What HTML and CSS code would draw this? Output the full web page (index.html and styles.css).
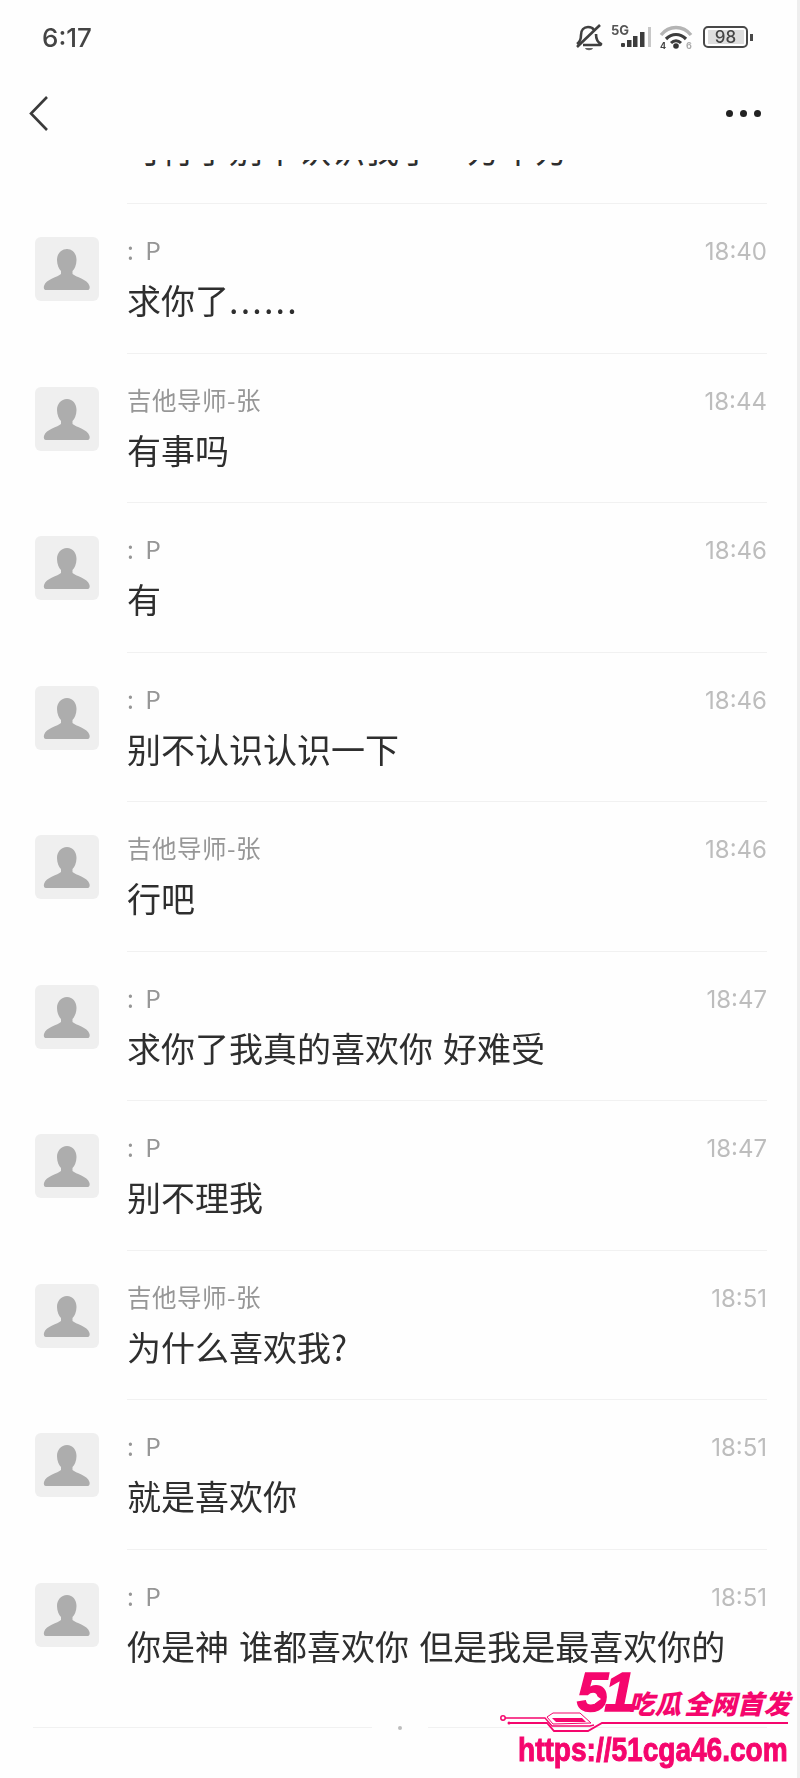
FILE: index.html
```html
<!DOCTYPE html>
<html lang="zh-CN">

<head>
    <meta charset="UTF-8">
    <meta name="viewport" content="width=device-width, initial-scale=1.0">
    <title>聊天记录</title>
    <link rel="stylesheet" href="styles.css">
</head>

<body>

    <svg class="defs" width="0" height="0">
        <symbol id="person" viewBox="0 0 64 64">
            <rect width="64" height="64" rx="6" fill="#efefef" />
            <path d="M32 12c6 0 9.500 5 9.500 11 0 5-2 9-4 11v3c3 3 15 5 17 12 .5 2 0 4-2 4H11c-2 0-2.500-2-2-4 2-7 14-9 17-12v-3c-2-2-4-6-4-11 0-6 4-11 10-11z" fill="#adadad" />
        </symbol>
    </svg>

    <div class="screen">

        <div class="status-bar">
            <span class="clock">6:17</span>
            <div class="status-icons">
                <svg class="icon-bell" width="28" height="30" viewBox="0 0 28 30">
                    <path d="M2 22c3-2 4-5 4-9 0-5 3-8 7-8 3 0 5 1 6 3M21 12c0 4 1 8 5 10 0 1-1 1-2 1H8" fill="none" stroke="#404040" stroke-width="2.600" />
                    <path d="M2 25L25 3" stroke="#404040" stroke-width="2.600" />
                    <path d="M10 26h8c-1 3-7 3-8 0z" fill="#666" />
                </svg>
                <span class="net-label">5G</span>
                <svg class="icon-signal" width="32" height="22" viewBox="0 0 32 22">
                    <rect x="0" y="17" width="4" height="4" rx="1" fill="#3c3c3c" />
                    <rect x="6" y="14" width="4.500" height="7" fill="#3c3c3c" />
                    <rect x="12" y="10" width="4.500" height="11" fill="#3c3c3c" />
                    <rect x="19" y="6" width="4.500" height="15" fill="#3c3c3c" />
                    <rect x="27" y="1" width="3" height="20" fill="#c8c8c8" />
                </svg>
                <svg class="icon-wifi" width="34" height="26" viewBox="0 0 34 26">
                    <path d="M2 11C10 1 24 1 32 11" fill="none" stroke="#b4b4b4" stroke-width="3.400" />
                    <path d="M7 15c6-6 14-6 20 0" fill="none" stroke="#3c3c3c" stroke-width="3.200" />
                    <path d="M12 19c3-3 7-3 10 0" fill="none" stroke="#3c3c3c" stroke-width="3" />
                    <circle cx="17" cy="22" r="2.800" fill="#333" />
                    <text x="1" y="25" class="wifi-tag">4</text>
                    <text x="27" y="25" class="wifi-tag wifi-tag-light">6</text>
                </svg>
                <div class="battery">
                    <div class="battery-body"><span class="battery-level">98</span></div>
                    <div class="battery-nub"></div>
                </div>
            </div>
        </div>

        <div class="nav">
            <svg width="22" height="38" viewBox="0 0 22 38">
                <path d="M19 2L3 18.500 19 35" fill="none" stroke="#3a3a3a" stroke-width="2.600" />
            </svg>
            <div class="more"><i></i><i></i><i></i></div>
        </div>

        <div class="clipped-row">
            <div class="msg">可行了别不认识我了一方不方</div>
        </div>

        <div class="row">
            <svg class="avatar"><use href="#person" /></svg>
            <div class="content">
                <div class="head"><span class="name">: P</span><span class="time">18:40</span></div>
                <div class="msg">求你了<span class="dots">......</span></div>
            </div>
        </div>

        <div class="row">
            <svg class="avatar"><use href="#person" /></svg>
            <div class="content">
                <div class="head"><span class="name">吉他导师-张</span><span class="time">18:44</span></div>
                <div class="msg">有事吗</div>
            </div>
        </div>

        <div class="row">
            <svg class="avatar"><use href="#person" /></svg>
            <div class="content">
                <div class="head"><span class="name">: P</span><span class="time">18:46</span></div>
                <div class="msg">有</div>
            </div>
        </div>

        <div class="row">
            <svg class="avatar"><use href="#person" /></svg>
            <div class="content">
                <div class="head"><span class="name">: P</span><span class="time">18:46</span></div>
                <div class="msg">别不认识认识一下</div>
            </div>
        </div>

        <div class="row">
            <svg class="avatar"><use href="#person" /></svg>
            <div class="content">
                <div class="head"><span class="name">吉他导师-张</span><span class="time">18:46</span></div>
                <div class="msg">行吧</div>
            </div>
        </div>

        <div class="row">
            <svg class="avatar"><use href="#person" /></svg>
            <div class="content">
                <div class="head"><span class="name">: P</span><span class="time">18:47</span></div>
                <div class="msg">求你了我真的喜欢你 好难受</div>
            </div>
        </div>

        <div class="row">
            <svg class="avatar"><use href="#person" /></svg>
            <div class="content">
                <div class="head"><span class="name">: P</span><span class="time">18:47</span></div>
                <div class="msg">别不理我</div>
            </div>
        </div>

        <div class="row">
            <svg class="avatar"><use href="#person" /></svg>
            <div class="content">
                <div class="head"><span class="name">吉他导师-张</span><span class="time">18:51</span></div>
                <div class="msg">为什么喜欢我?</div>
            </div>
        </div>

        <div class="row">
            <svg class="avatar"><use href="#person" /></svg>
            <div class="content">
                <div class="head"><span class="name">: P</span><span class="time">18:51</span></div>
                <div class="msg">就是喜欢你</div>
            </div>
        </div>

        <div class="row row-last">
            <svg class="avatar"><use href="#person" /></svg>
            <div class="content">
                <div class="head"><span class="name">: P</span><span class="time">18:51</span></div>
                <div class="msg">你是神 谁都喜欢你 但是我是最喜欢你的</div>
            </div>
        </div>

        <div class="footer-line">
            <div class="seg seg-left"></div>
            <div class="footer-dot"></div>
            <div class="seg"></div>
        </div>

        <div class="edge"></div>

        <!-- watermark sits over the list -->
        <div class="mark">
            <span class="mark-num">51</span>
            <div class="mark-play"></div>
            <span class="mark-title">吃瓜 全网首发</span>
            <svg class="mark-lines" width="300" height="30" viewBox="0 0 300 30">
                <circle cx="3" cy="13" r="2.200" fill="none" stroke="#f5066d" stroke-width="1.500" />
                <circle cx="9" cy="18" r="1.500" fill="#f5066d" />
                <path d="M5 13h40l7 8h38l4-1" fill="none" stroke="#f5066d" stroke-width="1.300" />
                <path d="M9 18h38l7 8h34l14-8h186" fill="none" stroke="#f5066d" stroke-width="1.800" />
                <path d="M47 12l6-4h27l11 10-38 1z" fill="#fff" stroke="#f5066d" stroke-width="1" />
                <path d="M52 13h30l4 4H56z" fill="#f5066d" />
            </svg>
            <div class="mark-url">https://51cga46.com</div>
        </div>

    </div>

</body>

</html>
```

FILE: styles.css
```css
body {
    margin: 0;
    padding: 0;
    background-color: #fefefe;
    font-family: 'Noto Sans CJK SC', 'Noto Sans', sans-serif;
}

.defs {
    position: absolute;
}

.screen {
    position: relative;
    width: 800px;
    height: 1778px;
    overflow: hidden;
    background-color: #fefefe;
}

.edge {
    position: absolute;
    top: 0;
    right: 0;
    width: 3px;
    height: 100%;
    background-color: #eeeeee;
}

.status-bar {
    height: 74px;
    padding: 0 47px 0 42px;
    display: flex;
    justify-content: space-between;
    align-items: center;
    filter: blur(0.4px);
}

.clock {
    font-family: 'Inter', sans-serif;
    font-size: 26px;
    font-weight: 500;
    color: #444;
}

.status-icons {
    display: flex;
    align-items: center;
}

.icon-bell {
    margin-right: 5px;
}

.net-label {
    font-family: 'Inter', sans-serif;
    font-size: 13px;
    font-weight: 700;
    color: #555;
    margin: -14px -8px 0 3px;
}

.icon-wifi {
    margin-left: 6px;
}

.wifi-tag {
    font-family: 'Inter', sans-serif;
    font-size: 9px;
    font-weight: 700;
    fill: #444;
}

.wifi-tag-light {
    fill: #aaa;
}

.battery {
    display: flex;
    align-items: center;
    margin-left: 10px;
}

.battery-body {
    width: 41px;
    height: 18px;
    border: 2px solid #484848;
    border-radius: 5px;
    display: flex;
    align-items: center;
    justify-content: center;
    background-color: #fff;
    background-image: linear-gradient(#dedede, #dedede);
    background-size: 36px 14px;
    background-position: center;
    background-repeat: no-repeat;
}

.battery-level {
    font-family: 'Inter', sans-serif;
    font-size: 17px;
    font-weight: 500;
    color: #444;
}

.battery-nub {
    width: 3px;
    height: 7px;
    margin-left: 2px;
    background-color: #484848;
}

.nav {
    height: 86px;
    padding: 21px 39px 0 28px;
    display: flex;
    justify-content: space-between;
    align-items: flex-start;
    box-sizing: border-box;
    filter: blur(0.3px);
}

.more {
    display: flex;
    gap: 7px;
    margin-top: 15px;
}

.more i {
    display: block;
    width: 7px;
    height: 7px;
    border-radius: 50%;
    background-color: #222;
}

.clipped-row {
    height: 44px;
    margin-left: 127px;
    margin-right: 33px;
    box-sizing: border-box;
    overflow: hidden;
    border-bottom: 1px solid #f1f1f1;
}

.clipped-row .msg {
    margin-top: -33px;
    height: 42px;
    overflow: hidden;
}

.row {
    height: 149.55px;
    box-sizing: border-box;
    padding: 33px 33px 0 35px;
    display: flex;
    gap: 28px;
    position: relative;
}

.row::after {
    content: "";
    position: absolute;
    left: 127px;
    right: 33px;
    bottom: 0;
    height: 1px;
    background-color: #f1f1f1;
}

.row-last {
    height: 177px;
}

.row-last::after {
    display: none;
}

.avatar {
    width: 64px;
    height: 64px;
    flex-shrink: 0;
}

.content {
    flex: 1;
    margin-top: -1px;
    filter: blur(0.4px);
}

.head {
    display: flex;
    justify-content: space-between;
    align-items: flex-start;
    height: 28px;
}

.name {
    font-size: 24.500px;
    line-height: 28px;
    letter-spacing: 0.500px;
    word-spacing: 5px;
    color: #969696;
}

.time {
    margin-top: 2px;
    font-family: 'Inter', sans-serif;
    font-size: 24px;
    line-height: 28px;
    color: #bdbdbd;
}

.msg {
    margin-top: 14px;
    font-size: 34px;
    line-height: 44px;
    word-spacing: 2.500px;
    color: #2e2e2e;
    white-space: nowrap;
}

.dots {
    letter-spacing: 2.200px;
}

.footer-line {
    margin: 0 33px;
    height: 2px;
    display: flex;
    align-items: center;
}

.seg {
    flex: 1;
    height: 1px;
    background-color: #f1f1f1;
}

.seg-left {
    flex: none;
    width: 339px;
}

.footer-dot {
    width: 4px;
    height: 4px;
    margin: 0 26px;
    border-radius: 50%;
    background-color: #bdbdbd;
}

.mark {
    position: absolute;
    left: 500px;
    top: 1665px;
    width: 300px;
    height: 113px;
    color: #f5066d;
}

.mark-num {
    position: absolute;
    left: 77px;
    top: 7px;
    font-family: 'Liberation Sans', sans-serif;
    font-size: 56px;
    line-height: 40px;
    font-weight: 700;
    font-style: italic;
    letter-spacing: -4px;
    -webkit-text-stroke: 1.500px #f5066d;
}

.mark-play {
    position: absolute;
    left: 94px;
    top: 29px;
    width: 0;
    height: 0;
    border-left: 7px solid #fff;
    border-top: 5px solid transparent;
    border-bottom: 5px solid transparent;
}

.mark-title {
    position: absolute;
    left: 128px;
    top: 24px;
    font-size: 26.500px;
    line-height: 28px;
    font-weight: 900;
    font-style: italic;
    white-space: pre;
    word-spacing: -3px;
}

.mark-lines {
    position: absolute;
    left: 0;
    top: 40px;
}

.mark-url {
    position: absolute;
    left: 18px;
    top: 65px;
    font-family: 'Liberation Sans', sans-serif;
    font-size: 34px;
    line-height: 38px;
    font-weight: 700;
    white-space: nowrap;
    transform: scaleX(0.825);
    transform-origin: left center;
    -webkit-text-stroke: 1px #f5066d;
}
```
